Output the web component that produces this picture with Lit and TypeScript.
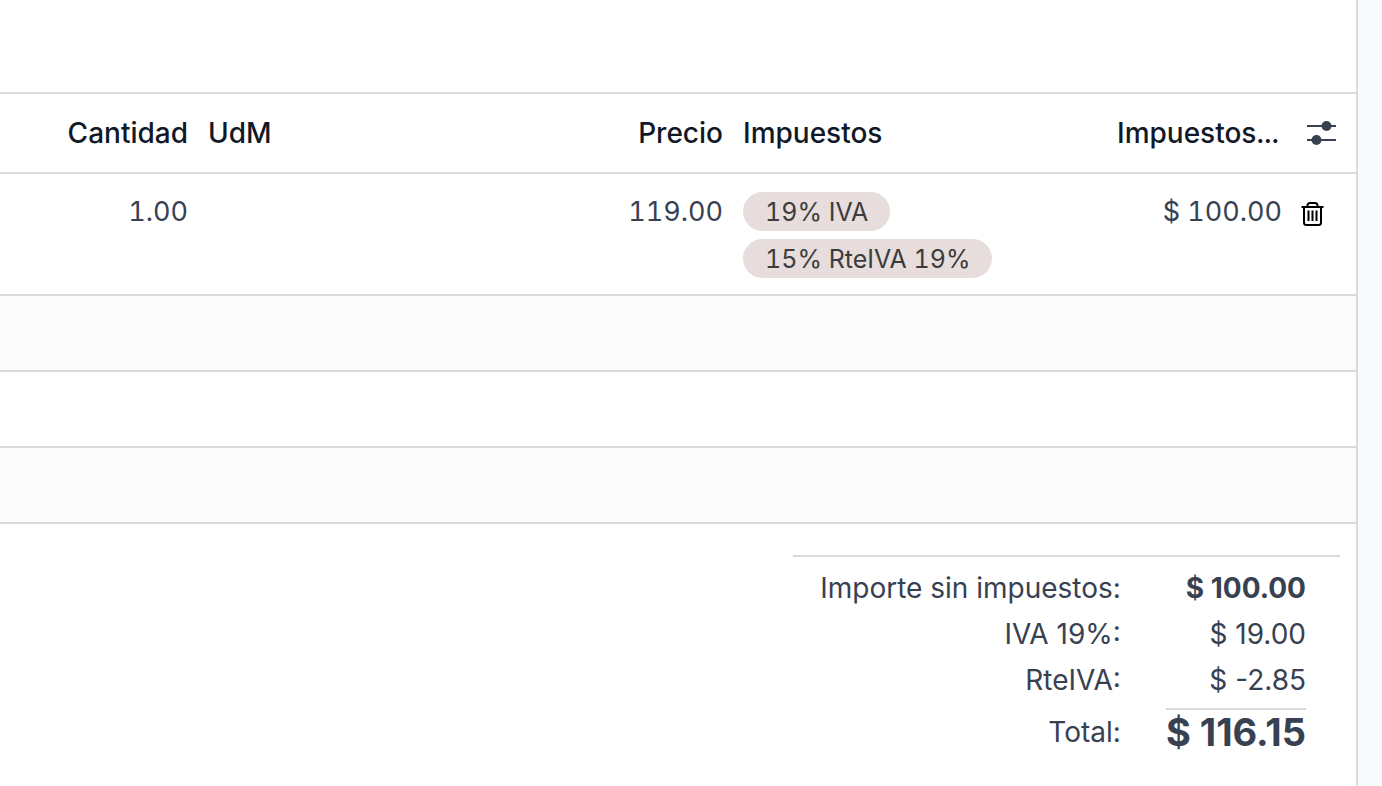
import { LitElement, html, css } from "lit";
import { customElement } from "lit/decorators.js";

interface Line {
  quantity: string;
  uom: string;
  price: string;
  taxes: string[];
  amount: string;
}

interface Total {
  label: string;
  value: string;
  kind: string;
}

const LINES: Line[] = [
  {
    quantity: "1.00",
    uom: "",
    price: "119.00",
    taxes: ["19% IVA", "15% RteIVA 19%"],
    amount: "$ 100.00",
  },
];

const TOTALS: Total[] = [
  { label: "Importe sin impuestos:", value: "$ 100.00", kind: "strong" },
  { label: "IVA 19%:", value: "$ 19.00", kind: "" },
  { label: "RteIVA:", value: "$ -2.85", kind: "" },
  { label: "Total:", value: "$ 116.15", kind: "grand" },
];

@customElement("order-lines")
class OrderLines extends LitElement {
  static styles = css`
    :host {
      display: block;
      font-variant-numeric: tabular-nums;
    }
    .lines {
      width: 100%;
      table-layout: fixed;
      border-collapse: separate;
      border-spacing: 0;
      border-top: 2px solid #d8dadd;
    }
    .c-qty { width: 198px; }
    .c-price { width: 200px; }
    .c-taxes { width: 374px; }
    .c-amount { width: 185px; }
    .c-tools { width: 64px; }
    th {
      height: 78px;
      padding: 0 10px;
      border-bottom: 2px solid #d8dadd;
      color: #111827;
      font-weight: 500;
      text-align: left;
      white-space: nowrap;
    }
    td {
      height: 74px;
      padding: 0 10px;
      border-bottom: 2px solid #d8dadd;
      font-size: 27px;
      vertical-align: top;
    }
    .line td {
      padding-top: 17px;
      padding-bottom: 16px;
    }
    .line .taxes { padding-top: 18px; }
    .num { text-align: right; }
    .blank:nth-child(even) { background: #fcfcfc; }
    .tags {
      display: flex;
      flex-direction: column;
      align-items: flex-start;
      gap: 8px;
    }
    .tag {
      padding: 1px 22px 0;
      border-radius: 20px;
      background: #e6dddc;
      color: #3c3c3c;
      font-size: 25px;
      line-height: 38px;
    }
    .tool {
      display: block;
      padding: 0;
      border: 0;
      background: none;
      cursor: pointer;
    }
    .tool svg { display: block; }
    th.tools { padding: 0 0 0 14px; color: #374151; }
    .line .tools { padding: 26px 0 0 8px; }
    .tools .tool { color: inherit; }
    .line .tools .tool { color: #000; }
  `;

  render() {
    return html`
      <table class="lines">
        <colgroup>
          <col class="c-qty" />
          <col />
          <col class="c-price" />
          <col class="c-taxes" />
          <col class="c-amount" />
          <col class="c-tools" />
        </colgroup>
        <thead>
          <tr>
            <th class="num">Cantidad</th>
            <th>UdM</th>
            <th class="num">Precio</th>
            <th>Impuestos</th>
            <th>Impuestos...</th>
            <th class="tools">
              <button class="tool" type="button" aria-label="Columnas opcionales">
                <svg width="32" height="32" viewBox="0 0 32 32" fill="currentColor">
                  <rect x="1" y="8" width="29" height="2" />
                  <rect x="1" y="22" width="29" height="2" />
                  <circle cx="20.5" cy="9" r="5" />
                  <circle cx="10.5" cy="23" r="5" />
                </svg>
              </button>
            </th>
          </tr>
        </thead>
        <tbody>
          ${LINES.map(
            (line) => html`
              <tr class="line">
                <td class="num">${line.quantity}</td>
                <td>${line.uom}</td>
                <td class="num">${line.price}</td>
                <td class="taxes">
                  <div class="tags">
                    ${line.taxes.map((tax) => html`<span class="tag">${tax}</span>`)}
                  </div>
                </td>
                <td class="num">${line.amount}</td>
                <td class="tools">
                  <button class="tool" type="button" aria-label="Eliminar">
                    <svg width="26" height="28" viewBox="0 0 26 28" fill="none" stroke="currentColor">
                      <path d="M1.5 7H23.5" stroke-width="2" />
                      <path d="M7.5 6.5V5.5Q7.5 3 10 3H15Q17.5 3 17.5 5.5V6.5" stroke-width="2" />
                      <path d="M4 7V22.5Q4 25 6.5 25H18.5Q21 25 21 22.5V7" stroke-width="2" />
                      <path d="M8.5 10.5V21M12.5 10.5V21M16.5 10.5V21" stroke-width="2" />
                    </svg>
                  </button>
                </td>
              </tr>
            `,
          )}
          ${[0, 1, 2].map(() => html`<tr class="blank"><td colspan="6"></td></tr>`)}
        </tbody>
      </table>
    `;
  }
}

@customElement("order-totals")
class OrderTotals extends LitElement {
  static styles = css`
    :host {
      display: flex;
      justify-content: flex-end;
      padding: 31px 16px 24px;
    }
    .box {
      display: flex;
      justify-content: flex-end;
      box-sizing: border-box;
      width: 547px;
      padding: 8px 34px 0 0;
      border-top: 2px solid #d8dadd;
    }
    .totals {
      border-collapse: separate;
      border-spacing: 0;
    }
    th {
      padding: 2px 45px 2px 0;
      font-weight: 400;
      text-align: right;
      vertical-align: top;
    }
    td {
      padding: 2px 0;
      text-align: right;
      vertical-align: top;
    }
    .strong td { font-weight: 700; }
    .grand th { padding-top: 8px; }
    .grand td {
      padding: 5px 0 0;
      font-size: 38px;
      font-weight: 700;
    }
    .sum {
      display: block;
      border-top: 2px solid #d8dadd;
      line-height: 44px;
    }
  `;

  render() {
    return html`
      <div class="box">
        <table class="totals">
          <tbody>
            ${TOTALS.map(
              (row) => html`
                <tr class=${row.kind}>
                  <th scope="row">${row.label}</th>
                  <td>
                    ${row.kind === "grand"
                      ? html`<span class="sum">${row.value}</span>`
                      : row.value}
                  </td>
                </tr>
              `,
            )}
          </tbody>
        </table>
      </div>
    `;
  }
}

@customElement("app-root")
class AppRoot extends LitElement {
  static styles = css`
    :host {
      display: block;
      box-sizing: border-box;
      min-height: 100vh;
      padding-right: 24px;
      background: #f9fafb;
      color: #374151;
      font-family: Inter, sans-serif;
      font-size: 28px;
      line-height: 42px;
    }
    .sheet {
      box-sizing: border-box;
      min-height: 100vh;
      padding-top: 92px;
      border-right: 2px solid #d8dadd;
      background: #fff;
    }
  `;

  render() {
    return html`
      <main class="sheet">
        <order-lines></order-lines>
        <order-totals></order-totals>
      </main>
    `;
  }
}
